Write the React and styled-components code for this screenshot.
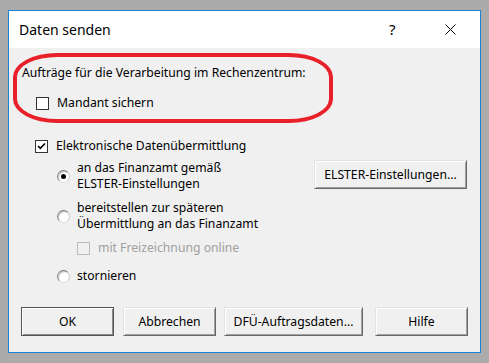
import React from "react";
import styled, { createGlobalStyle } from "styled-components";

const GlobalStyle = createGlobalStyle`
  html, body {
    margin: 0;
    padding: 0;
    background: #ababab;
  }
  body {
    font-family: "Noto Sans", "Open Sans", sans-serif;
    font-size: 12.2px;
    color: #000;
  }
`;

const Window = styled.div`
  box-sizing: border-box;
  width: 473px;
  height: 343px;
  margin: 10px 0 0 8px;
  border: 1px solid #1883d7;
  display: flex;
  flex-direction: column;
  background: #f0f0f0;
`;

const TitleBar = styled.div`
  height: 37px;
  background: #fff;
  display: flex;
  align-items: center;
  padding-left: 10px;
`;

const Title = styled.div`
  flex: 1;
  font-size: 14px;
  margin-top: -1px;
`;

const HelpGlyph = styled.span`
  font-size: 15px;
  width: 12px;
  margin-right: 44px;
  margin-top: -2px;
`;

const CloseIcon = styled.svg`
  width: 11px;
  height: 11px;
  margin-right: 24px;
  margin-top: -1px;
`;

const Body = styled.div`
  flex: 1;
  display: flex;
  flex-direction: column;
  padding-top: 5px;
`;

const Marked = styled.div`
  box-sizing: border-box;
  width: 320px;
  height: 70px;
  margin-left: 4px;
  border: 4px solid #e8202a;
  border-radius: 44px / 24px;
  padding: 8px 0 0 5px;
`;

const Line = styled.div`
  line-height: 16px;
  height: 16px;
  white-space: nowrap;
  color: ${(p) => (p.$disabled ? "#a0a0a0" : "#000")};
`;

const Row = styled.div`
  display: flex;
  align-items: center;
  margin-top: ${(p) => p.$top || 0}px;
  margin-left: ${(p) => p.$left || 0}px;
`;

const Box = styled.span`
  box-sizing: border-box;
  width: 13px;
  height: 13px;
  border: 1px solid ${(p) => (p.$disabled ? "#bcbcbc" : "#333")};
  background: ${(p) => (p.$disabled ? "#f0f0f0" : "#fff")};
  margin-right: ${(p) => p.$gap || 8}px;
  display: flex;
  align-items: center;
  justify-content: center;
  flex-shrink: 0;
`;

const Radio = styled.span`
  box-sizing: border-box;
  width: 13px;
  height: 13px;
  border-radius: 50%;
  border: 1px solid;
  border-color: #7a7a7a #c8c8c8 #dcdcdc #8a8a8a;
  background: #fff;
  box-shadow: inset 1px 1px 1px #bdbdbd;
  margin-right: 7px;
  display: flex;
  align-items: center;
  justify-content: center;
  flex-shrink: 0;
  &::after {
    content: "";
    width: 5px;
    height: 5px;
    border-radius: 50%;
    background: ${(p) => (p.$checked ? "#000" : "transparent")};
  }
`;

const Options = styled.div`
  display: flex;
  margin-top: 6px;
`;

const OptionColumn = styled.div`
  display: flex;
  flex-direction: column;
  margin-left: 48px;
  width: 257px;
`;

const Button = styled.button`
  box-sizing: border-box;
  width: ${(p) => p.$w}px;
  height: 29px;
  margin-left: ${(p) => p.$ml || 0}px;
  font-family: inherit;
  font-size: 12.2px;
  color: #000;
  background: #f0f0f0;
  border: 1px solid;
  border-color: ${(p) =>
    p.$default ? "#555 #555 #555 #555" : "#e3e3e3 #696969 #696969 #e3e3e3"};
  box-shadow: ${(p) =>
    p.$default
      ? "inset 1px 1px #fff, inset -1px -1px #8a8a8a"
      : "inset 1px 1px #fff, inset -1px -1px #a0a0a0"};
  padding: 0;
`;

const SideButton = styled(Button)`
  align-self: flex-start;
`;

const ButtonBar = styled.div`
  display: flex;
  margin-top: 23px;
  padding-left: 12px;
`;

const Check = () => (
  <svg width="9" height="8" viewBox="0 0 9 8">
    <path d="M1 4 L3.3 6.3 L8 1.5" fill="none" stroke="#000" strokeWidth="1.6" />
  </svg>
);

export default function App() {
  return (
    <>
      <GlobalStyle />
      <Window>
        <TitleBar>
          <Title>Daten senden</Title>
          <HelpGlyph>?</HelpGlyph>
          <CloseIcon viewBox="0 0 11 11">
            <path d="M0.5 0.5 L10.5 10.5 M10.5 0.5 L0.5 10.5" stroke="#000" strokeWidth="1" />
          </CloseIcon>
        </TitleBar>
        <Body>
          <Marked>
            <Line>Aufträge für die Verarbeitung im Rechenzentrum:</Line>
            <Row $top={14} $left={14}>
              <Box />
              <Line>Mandant sichern</Line>
            </Row>
          </Marked>
          <Row $top={15} $left={26}>
            <Box>
              <Check />
            </Box>
            <Line>Elektronische Datenübermittlung</Line>
          </Row>
          <Options>
            <OptionColumn>
              <Row>
                <Radio $checked />
                <div>
                  <Line>an das Finanzamt gemäß</Line>
                  <Line>ELSTER-Einstellungen</Line>
                </div>
              </Row>
              <Row $top={8}>
                <Radio />
                <div>
                  <Line>bereitstellen zur späteren</Line>
                  <Line>Übermittlung an das Finanzamt</Line>
                </div>
              </Row>
              <Row $top={8} $left={20}>
                <Box $disabled $gap={8} />
                <Line $disabled>mit Freizeichnung online</Line>
              </Row>
              <Row $top={12}>
                <Radio />
                <Line>stornieren</Line>
              </Row>
            </OptionColumn>
            <SideButton $w={153}>ELSTER-Einstellungen...</SideButton>
          </Options>
          <ButtonBar>
            <Button $w={93} $default>OK</Button>
            <Button $w={93} $ml={9}>Abbrechen</Button>
            <Button $w={139} $ml={8}>DFÜ-Auftragsdaten...</Button>
            <Button $w={93} $ml={12}>Hilfe</Button>
          </ButtonBar>
        </Body>
      </Window>
    </>
  );
}
